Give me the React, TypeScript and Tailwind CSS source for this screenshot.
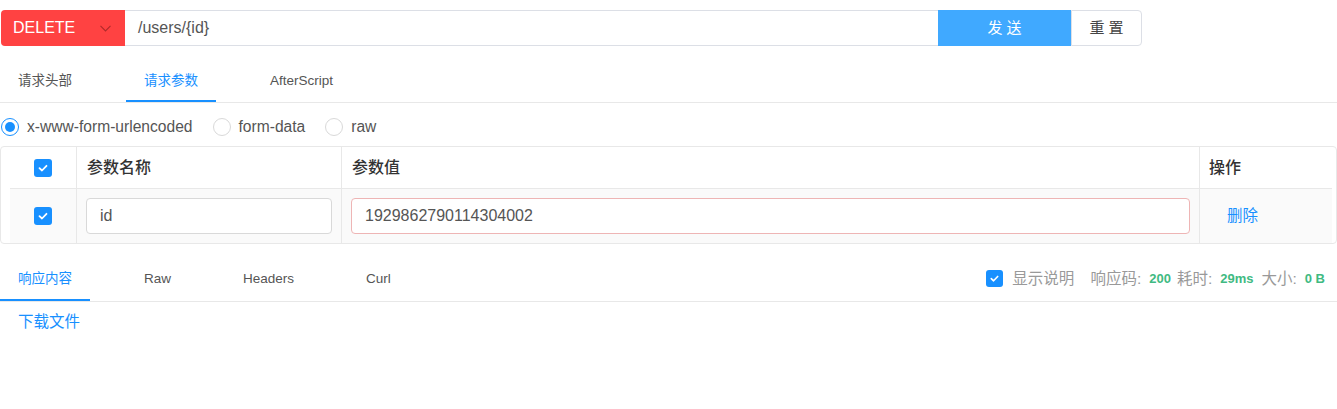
import React from "react";

const FONT = { fontFamily: '"Liberation Sans", Arial, "Noto Sans CJK SC", sans-serif' };

function Check({ size = 18 }: { size?: number }) {
  return (
    <span
      className="inline-flex items-center justify-center rounded-[3px] bg-[#1890ff]"
      style={{ width: size, height: size }}
    >
      <svg width={size - 6} height={size - 6} viewBox="0 0 12 12" fill="none">
        <path d="M2.5 6.2 L5 8.5 L9.5 3.8" stroke="white" strokeWidth="1.8" strokeLinecap="round" strokeLinejoin="round" />
      </svg>
    </span>
  );
}

function Radio({ checked, label }: { checked?: boolean; label: string }) {
  return (
    <div className="flex items-center mr-[20px]">
      <span
        className={
          "w-[18px] h-[18px] rounded-full border flex items-center justify-center bg-white " +
          (checked ? "border-[#1890ff]" : "border-[#d9d9d9]")
        }
      >
        {checked && <span className="w-[10px] h-[10px] rounded-full bg-[#1890ff]" />}
      </span>
      <span className="ml-[8px] text-[15.6px] text-[#555]">{label}</span>
    </div>
  );
}

function Tabs({ items, active, shift }: { items: string[]; active: number; shift: string }) {
  return (
    <div className="flex h-full">
      {items.map((t, i) => (
        <div
          key={t}
          className={
            "h-full flex items-center px-[18px] mr-[36px] border-b-2 text-[13.5px] " +
            shift +
            " " +
            (i === active ? "border-[#1890ff] text-[#1890ff]" : "border-transparent text-[#555]")
          }
        >
          {t}
        </div>
      ))}
    </div>
  );
}

export default function App() {
  return (
    <div className="w-[1337px] h-[409px] bg-white overflow-hidden" style={FONT}>
      {/* URL bar */}
      <div className="pt-[10px]">
        <div className="flex h-[36px] w-[1141px] ml-[1px]">
          <div className="w-[124px] bg-[#ff4242] rounded-l-[4px] flex items-center justify-between pl-[12px] pr-[14px]">
            <span className="text-white text-[16px]">DELETE</span>
            <svg width="11" height="7" viewBox="0 0 11 7" fill="none">
              <path d="M0.5 0.8 L5.5 6 L10.5 0.8" stroke="#b02a2a" strokeWidth="1.1" />
            </svg>
          </div>
          <div className="flex-1 border-y border-[#dcdfe6] flex items-center px-[13px] text-[16px] text-[#555]">
            /users/{"{id}"}
          </div>
          <div className="w-[133px] bg-[#40a9ff] flex items-center justify-center text-white text-[15px] tracking-[4px] pl-[4px]">
            发送
          </div>
          <div className="w-[71px] border border-[#dcdfe6] rounded-r-[4px] flex items-center justify-center text-[#444] text-[15px] tracking-[4px] pl-[4px]">
            重置
          </div>
        </div>
      </div>

      {/* Request tabs */}
      <div className="mt-[12px] h-[45px] border-b border-[#e8e8e8]">
        <Tabs items={["请求头部", "请求参数", "AfterScript"]} active={1} shift="pt-[5px]" />
      </div>

      {/* Radios */}
      <div className="mt-[12px] h-[24px] flex items-center pl-[1px]">
        <Radio checked label="x-www-form-urlencoded" />
        <Radio label="form-data" />
        <Radio label="raw" />
      </div>

      {/* Table */}
      <div className="mt-[7px] border border-[#e8e8e8] rounded-[4px] pl-[9px] pr-[4px]">
        <div className="flex h-[42px] border-b border-[#e8e8e8] text-[16px] font-medium text-[#333]">
          <div className="w-[67px] flex items-center justify-center border-r border-[#e8e8e8]">
            <Check />
          </div>
          <div className="w-[265px] flex items-center pl-[10px] border-r border-[#e8e8e8]">参数名称</div>
          <div className="w-[858px] flex items-center pl-[10px] border-r border-[#e8e8e8]">参数值</div>
          <div className="flex-1 flex items-center pl-[9px]">操作</div>
        </div>
        <div className="flex h-[54px] bg-[#fafafa]">
          <div className="w-[67px] flex items-center justify-center border-r border-[#e8e8e8]">
            <Check />
          </div>
          <div className="w-[265px] flex items-center px-[9px] border-r border-[#e8e8e8]">
            <div className="w-full h-[36px] bg-white border border-[#d9d9d9] rounded-[4px] flex items-center px-[13px] text-[16px] text-[#555]">
              id
            </div>
          </div>
          <div className="w-[858px] flex items-center px-[9px] border-r border-[#e8e8e8]">
            <div className="w-full h-[36px] bg-white border border-[#eeb5b5] rounded-[4px] flex items-center px-[13px] text-[16px] text-[#555]">
              1929862790114304002
            </div>
          </div>
          <div className="flex-1 flex items-center pl-[27px] text-[15.5px] text-[#1890ff]">删除</div>
        </div>
      </div>

      {/* Response tabs */}
      <div className="mt-[12px] h-[46px] border-b border-[#e8e8e8] flex justify-between">
        <Tabs items={["响应内容", "Raw", "Headers", "Curl"]} active={0} shift="pt-[3px]" />
        <div className="flex items-center pr-[12px] text-[15.5px] text-[#999]">
          <Check size={17} />
          <span className="ml-[9px]">显示说明</span>
          <span className="ml-[16px]">响应码:</span>
          <span className="ml-[8px] text-[13px] font-bold text-[#3fba82]">200</span>
          <span className="ml-[6px]">耗时:</span>
          <span className="ml-[8px] text-[13px] font-bold text-[#3fba82]">29ms</span>
          <span className="ml-[8px]">大小:</span>
          <span className="ml-[8px] text-[13px] font-bold text-[#3fba82]">0 B</span>
        </div>
      </div>

      <div className="mt-[10px] pl-[18px] text-[15.5px] text-[#1890ff] leading-[20px]">下载文件</div>
    </div>
  );
}
